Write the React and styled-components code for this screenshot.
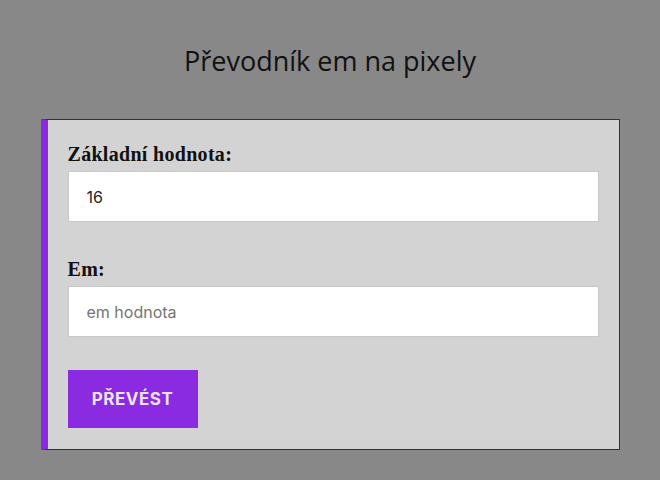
import React from "react";
import styled, { createGlobalStyle } from "styled-components";

const Global = createGlobalStyle`
  html, body { margin: 0; padding: 0; background: #888888; }
  * { box-sizing: border-box; }
`;

const Page = styled.div`
  padding-top: 44px;
  display: flex;
  flex-direction: column;
  align-items: center;
`;

const Title = styled.h1`
  margin: 0 0 41px;
  font-family: "Open Sans", "Noto Sans", sans-serif;
  font-weight: 400;
  font-size: 27px;
  line-height: 34px;
  color: #111;
`;

const Card = styled.form`
  width: 579px;
  background: #d3d3d3;
  border: 1px solid #333;
  border-left: 7px solid #8a2be2;
  padding: 22px 20px 21px;
  display: flex;
  flex-direction: column;
`;

const Label = styled.label`
  display: block;
  font-family: "Liberation Serif", "Times New Roman", serif;
  font-weight: 700;
  font-size: 20px;
  line-height: 24px;
  letter-spacing: 0.3px;
  color: #111;
  margin-bottom: 5px;
`;

const Input = styled.input`
  display: block;
  width: 100%;
  height: 51px;
  border: 1px solid #c8c8c8;
  background: #fff;
  padding: 0 18px;
  font-family: "Inter", "Roboto", sans-serif;
  font-size: 16px;
  color: #222;
  outline: none;
  margin-bottom: ${(p) => p.$gap}px;
  &::placeholder { color: #757575; }
`;

const Button = styled.button`
  align-self: flex-start;
  width: 130px;
  height: 58px;
  border: none;
  background: #8a2be2;
  color: #ece4f6;
  font-family: "Inter", "Roboto", sans-serif;
  font-weight: 700;
  font-size: 17px;
  letter-spacing: 0.5px;
  cursor: pointer;
`;

export default function App() {
  return (
    <>
      <Global />
      <Page>
        <Title>Převodník em na pixely</Title>
        <Card onSubmit={(e) => e.preventDefault()}>
          <Label htmlFor="base">Základní hodnota:</Label>
          <Input id="base" defaultValue="16" $gap={35} />
          <Label htmlFor="em">Em:</Label>
          <Input id="em" placeholder="em hodnota" $gap={33} />
          <Button type="submit">PŘEVÉST</Button>
        </Card>
      </Page>
    </>
  );
}
